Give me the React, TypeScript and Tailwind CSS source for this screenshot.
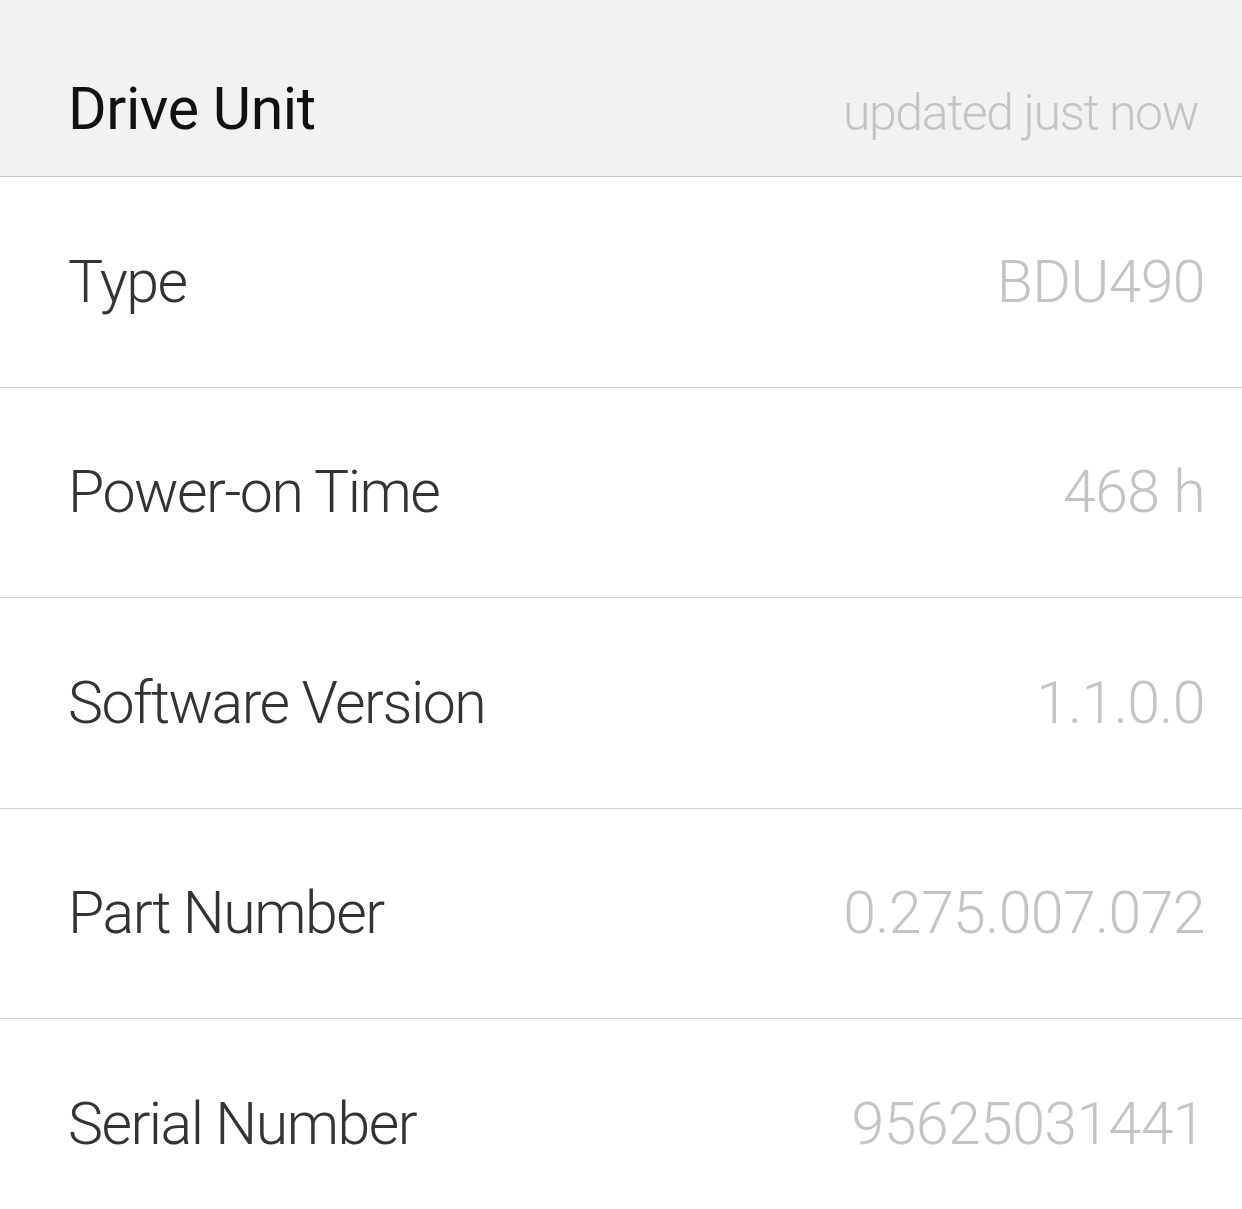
import React from "react";

const rows: [string, string][] = [
  ["Type", "BDU490"],
  ["Power-on Time", "468 h"],
  ["Software Version", "1.1.0.0"],
  ["Part Number", "0.275.007.072"],
  ["Serial Number", "95625031441"],
];

export default function App() {
  return (
    <div className="w-[1242px] h-[1209px] overflow-hidden bg-white" style={{ fontFamily: "Roboto, 'Noto Sans', sans-serif" }}>
      <div className="h-[177px] bg-[#f2f2f2] border-b border-[#c8c8c8] flex items-end justify-between pl-[68px] pr-[44px] pb-[38px]">
        <span className="text-[59px] leading-none font-normal text-[#111] tracking-[-0.4px]">Drive Unit</span>
        <span className="text-[50px] leading-none font-light text-[#c4c4c4] tracking-[-1.4px]">updated just now</span>
      </div>
      {rows.map(([label, value], i) => (
        <div
          key={label}
          className={`h-[210.6px] flex items-center justify-between pl-[68px] pr-[37px] ${i < rows.length - 1 ? "border-b border-[#cfcfcf]" : ""}`}
        >
          <span className="text-[59px] font-light text-[#333] tracking-[-1.5px]">{label}</span>
          <span className="text-[59px] font-light text-[#c4c4c4] tracking-[-0.6px]">{value}</span>
        </div>
      ))}
    </div>
  );
}
